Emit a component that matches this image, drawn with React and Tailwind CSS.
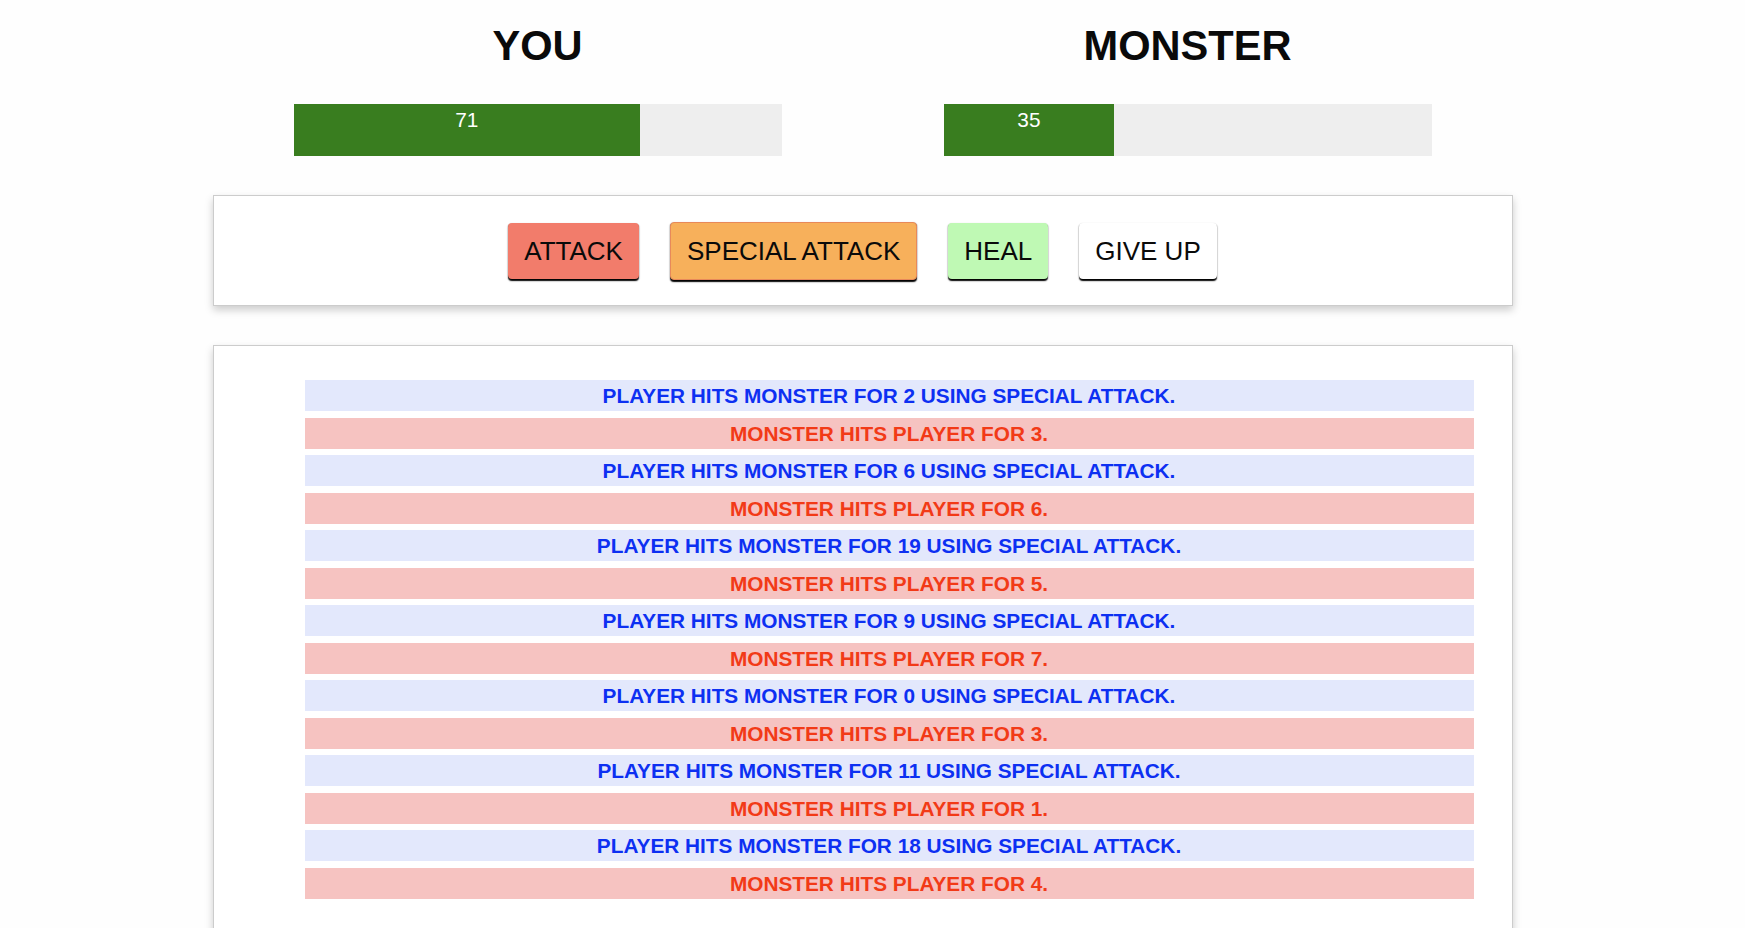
const log = [
  { who: 'player', n: 2 },
  { who: 'monster', n: 3 },
  { who: 'player', n: 6 },
  { who: 'monster', n: 6 },
  { who: 'player', n: 19 },
  { who: 'monster', n: 5 },
  { who: 'player', n: 9 },
  { who: 'monster', n: 7 },
  { who: 'player', n: 0 },
  { who: 'monster', n: 3 },
  { who: 'player', n: 11 },
  { who: 'monster', n: 1 },
  { who: 'player', n: 18 },
  { who: 'monster', n: 4 },
]

function HealthBar({ value }) {
  return (
    <div className="w-[488px] h-[52px] mx-auto bg-[#eeeeee]">
      <div
        className="h-full bg-[#397d1f] text-white text-center text-[20.8px] leading-[1.5]"
        style={{ width: value + '%' }}
      >
        {value}
      </div>
    </div>
  )
}

function Fighter({ name, health }) {
  return (
    <div className="flex-1">
      <h1 className="text-center font-bold text-[41.6px] leading-[58px] text-[#0a0a0a] mt-[17px] mb-[29px]">{name}</h1>
      <HealthBar value={health} />
    </div>
  )
}

function ActionButton({ label, className }) {
  return (
    <button
      className={`text-[26px] leading-none px-[16px] py-[15px] rounded-[4px] text-[#0a0a0a] shadow-[0_1.3px_1.3px_#000] ${className}`}
    >
      {label}
    </button>
  )
}

export default function App() {
  return (
    <div className="h-[928px] overflow-hidden bg-[#fefefe] font-['Liberation_Sans',Arial,sans-serif]">
      <div className="w-[1725px]">
        <div className="w-[1300px] mx-auto">
          {/* Fighters */}
          <section className="flex">
            <Fighter name="YOU" health={71} />
            <Fighter name="MONSTER" health={35} />
          </section>

          {/* Controls */}
          <section className="mt-[39px] h-[111px] border border-[#cccccc] shadow-[0_4px_8px_#cccccc] bg-white flex items-center justify-center gap-[31px]">
            <ActionButton label="ATTACK" className="bg-[#f27c6b]" />
            <ActionButton label="SPECIAL ATTACK" className="bg-[#f7b05b] border border-[#e8895a]" />
            <ActionButton label="HEAL" className="bg-[#bff9b4]" />
            <ActionButton label="GIVE UP" className="bg-white" />
          </section>

          {/* Log */}
          <section className="mt-[39px] border border-[#cccccc] shadow-[0_4px_8px_#cccccc] bg-white pt-[34px] pb-[40px] pl-[91px] pr-[38px]">
            <ul className="flex flex-col gap-[6.5px] font-bold uppercase text-center text-[20.8px] leading-[31px]">
              {log.map((e, i) =>
                e.who === 'player' ? (
                  <li key={i} className="bg-[#e3e8fc] text-[#0d30f2]">
                    Player hits monster for {e.n} using special attack.
                  </li>
                ) : (
                  <li key={i} className="bg-[#f6c3c1] text-[#f23a17]">
                    Monster hits player for {e.n}.
                  </li>
                )
              )}
            </ul>
          </section>
        </div>
      </div>
    </div>
  )
}
